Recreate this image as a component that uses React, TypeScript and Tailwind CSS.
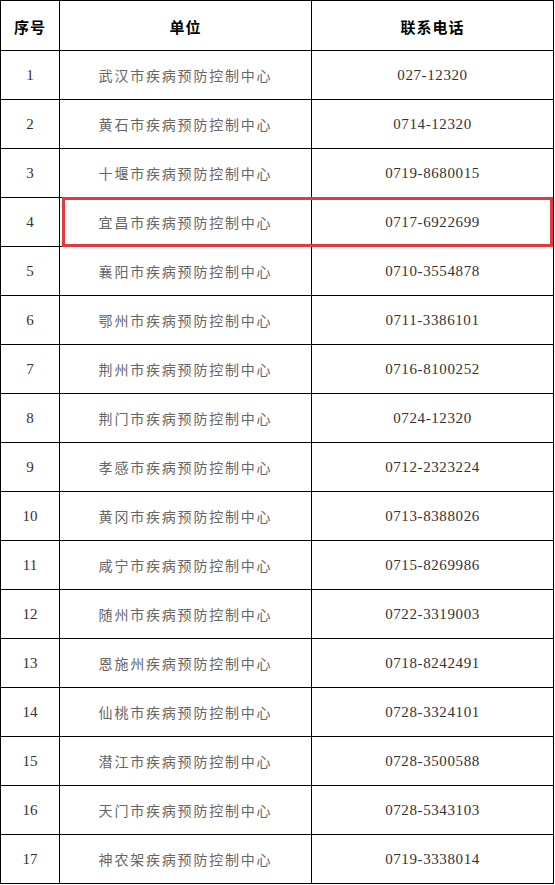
const rows: [string, string][] = [
  ["武汉市疾病预防控制中心", "027-12320"],
  ["黄石市疾病预防控制中心", "0714-12320"],
  ["十堰市疾病预防控制中心", "0719-8680015"],
  ["宜昌市疾病预防控制中心", "0717-6922699"],
  ["襄阳市疾病预防控制中心", "0710-3554878"],
  ["鄂州市疾病预防控制中心", "0711-3386101"],
  ["荆州市疾病预防控制中心", "0716-8100252"],
  ["荆门市疾病预防控制中心", "0724-12320"],
  ["孝感市疾病预防控制中心", "0712-2323224"],
  ["黄冈市疾病预防控制中心", "0713-8388026"],
  ["咸宁市疾病预防控制中心", "0715-8269986"],
  ["随州市疾病预防控制中心", "0722-3319003"],
  ["恩施州疾病预防控制中心", "0718-8242491"],
  ["仙桃市疾病预防控制中心", "0728-3324101"],
  ["潜江市疾病预防控制中心", "0728-3500588"],
  ["天门市疾病预防控制中心", "0728-5343103"],
  ["神农架疾病预防控制中心", "0719-3338014"],
];

const cjk = "font-['Noto_Sans_CJK_SC',sans-serif]";
const num = "font-['Liberation_Serif',serif]";

export default function App() {
  return (
    <div className="relative w-[555px] h-[885px] bg-white">
      <table className="w-[554px] border-collapse table-fixed">
        <colgroup>
          <col className="w-[59px]" />
          <col className="w-[252px]" />
          <col />
        </colgroup>
        <thead>
          <tr className="h-[50px]">
            <th className={`border border-black pt-[3px] text-center text-[15px] font-bold text-black tracking-[1px] ${cjk}`}>
              序号
            </th>
            <th className={`border border-black pt-[3px] text-center text-[15px] font-bold text-black tracking-[1px] ${cjk}`}>
              单位
            </th>
            <th className={`border border-black pt-[3px] text-center text-[15px] font-bold text-black tracking-[1px] ${cjk}`}>
              联系电话
            </th>
          </tr>
        </thead>
        <tbody>
          {rows.map(([name, phone], i) => (
            <tr key={i} className="h-[49px]">
              <td className={`border border-black text-center text-[15px] text-[#333] ${num}`}>
                {i + 1}
              </td>
              <td className={`border border-black text-center text-[14px] text-[#666] tracking-[1.8px] ${cjk}`}>
                {name}
              </td>
              <td className={`border border-black text-center text-[15px] text-[#333] tracking-[0.6px] ${num}`}>
                {phone}
              </td>
            </tr>
          ))}
        </tbody>
      </table>
      <div className="absolute left-[62px] top-[197px] w-[491px] h-[50px] border-[3px] border-[#e23a3f]" />
    </div>
  );
}
